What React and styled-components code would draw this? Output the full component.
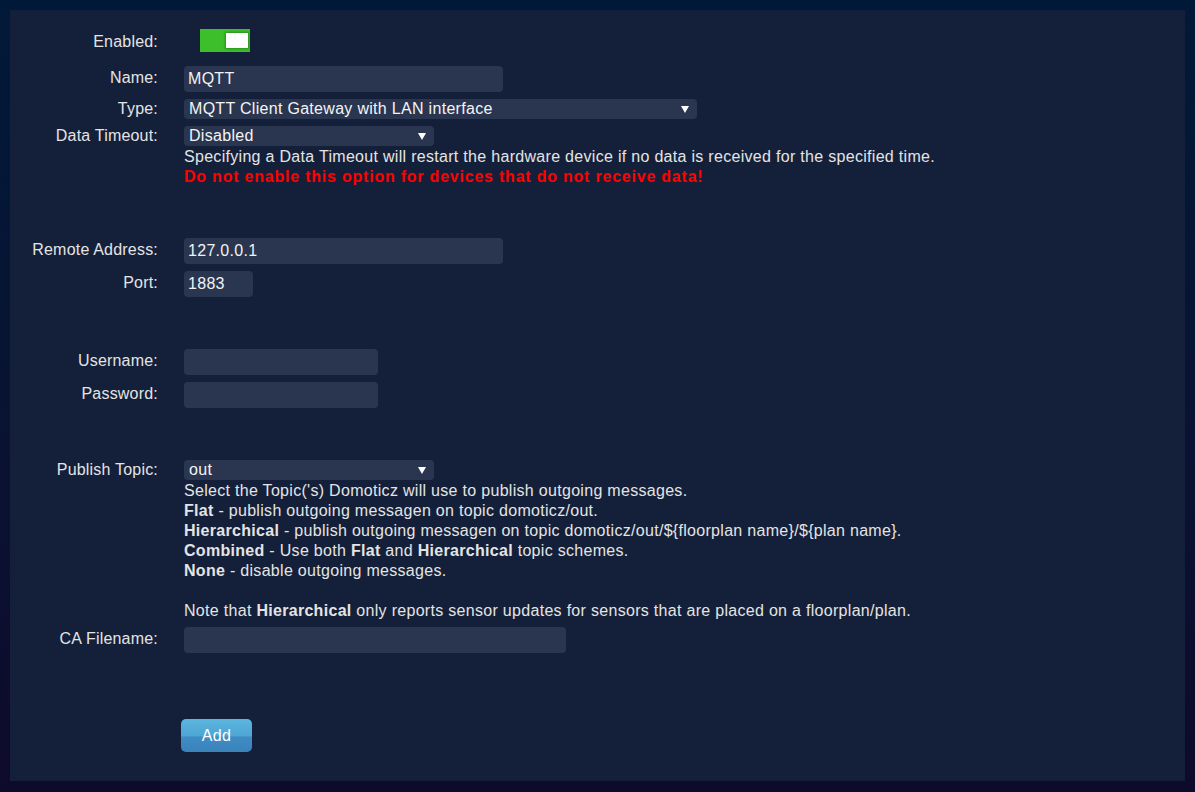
import React from "react";
import styled, { createGlobalStyle } from "styled-components";

const Global = createGlobalStyle`
  html, body { margin: 0; padding: 0; }
  body {
    min-height: 792px;
    background: linear-gradient(180deg, #011938 0%, #0a1232 60%, #0e0a2b 100%);
    font-family: "Liberation Sans", Arial, sans-serif;
    font-size: 16px;
    letter-spacing: 0.3px;
    color: #e4e4e4;
  }
  #root { padding: 10px; }
`;

const Panel = styled.div`
  background: #142039;
  width: 1175px;
  height: 771px;
  box-sizing: border-box;
  padding-top: 19px;
`;

const Row = styled.div`
  display: grid;
  grid-template-columns: 148px 1fr;
  column-gap: 26px;
  align-items: start;
  margin-top: ${(p) => p.$gap ?? 7}px;
`;

const Label = styled.div`
  text-align: right;
  line-height: 20px;
  letter-spacing: 0.2px;
  padding-top: ${(p) => p.$pt ?? 2}px;
  color: #e4e4e4;
`;

const Field = styled.div`
  display: flex;
  flex-direction: column;
  align-items: flex-start;
`;

const Switch = styled.div`
  position: relative;
  margin-left: 16px;
  width: 50px;
  height: 23px;
  background: #3cbf2a;
`;

const Knob = styled.div`
  position: absolute;
  right: 2px;
  top: 4px;
  width: 22px;
  height: 15px;
  background: #ffffff;
  box-shadow: 0 0 2px 1px rgba(30, 110, 20, 0.6);
`;

const Input = styled.input`
  box-sizing: border-box;
  width: ${(p) => p.$w}px;
  height: 26px;
  border: none;
  outline: none;
  border-radius: 4px;
  background: #2a3650;
  color: #f2f2f2;
  padding: 0 4px;
  font-family: "Liberation Sans", Arial, sans-serif;
  font-size: 16px;
  letter-spacing: 0.3px;
`;

const Select = styled.div`
  box-sizing: border-box;
  width: ${(p) => p.$w}px;
  height: 20px;
  border-radius: 4px;
  background: #2a3650;
  color: #f4f4f4;
  padding: 0 8px 0 5px;
  display: flex;
  align-items: center;
  justify-content: space-between;
  line-height: 20px;
`;

const Arrow = styled.svg`
  width: 8px;
  height: 7px;
  flex: none;
`;

const Desc = styled.div`
  line-height: 20px;
  color: #e4e4e4;
  margin-top: ${(p) => (p.$first ? 1 : 0)}px;
`;

const Warn = styled.div`
  line-height: 20px;
  color: #ff0000;
  font-weight: bold;
  letter-spacing: 0.78px;
`;

const Blank = styled.div`
  height: 20px;
`;

const Button = styled.button`
  margin-left: -3px;
  width: 71px;
  height: 33px;
  border: none;
  border-radius: 5px;
  background: linear-gradient(180deg, #5cb6de 0%, #4ea6d4 50%, #3f8cc3 55%, #3a83bb 100%);
  color: #ffffff;
  font-family: "Liberation Sans", Arial, sans-serif;
  font-size: 16px;
  letter-spacing: 0.3px;
  padding: 0;
  cursor: pointer;
`;

const Caret = () => (
  <Arrow viewBox="0 0 8 7">
    <polygon points="0,0 8,0 4,7" fill="#ffffff" />
  </Arrow>
);

export default function App() {
  return (
    <>
      <Global />
      <Panel>
        <Row $gap={0}>
          <Label $pt={3}>Enabled:</Label>
          <Field>
            <Switch>
              <Knob />
            </Switch>
          </Field>
        </Row>

        <Row $gap={14}>
          <Label $pt={2}>Name:</Label>
          <Field>
            <Input $w={319} defaultValue="MQTT" />
          </Field>
        </Row>

        <Row>
          <Label $pt={-1}>Type:</Label>
          <Field>
            <Select $w={513}>
              <span>MQTT Client Gateway with LAN interface</span>
              <Caret />
            </Select>
          </Field>
        </Row>

        <Row>
          <Label $pt={-1}>Data Timeout:</Label>
          <Field>
            <Select $w={250}>
              <span>Disabled</span>
              <Caret />
            </Select>
            <Desc $first>
              Specifying a Data Timeout will restart the hardware device if no data is received for the specified time.
            </Desc>
            <Warn>Do not enable this option for devices that do not receive data!</Warn>
          </Field>
        </Row>

        <Row $gap={51}>
          <Label $pt={2}>Remote Address:</Label>
          <Field>
            <Input $w={319} defaultValue="127.0.0.1" />
          </Field>
        </Row>

        <Row>
          <Label $pt={2}>Port:</Label>
          <Field>
            <Input $w={69} defaultValue="1883" />
          </Field>
        </Row>

        <Row $gap={52}>
          <Label $pt={2}>Username:</Label>
          <Field>
            <Input $w={194} />
          </Field>
        </Row>

        <Row>
          <Label $pt={2}>Password:</Label>
          <Field>
            <Input $w={194} type="password" />
          </Field>
        </Row>

        <Row $gap={52}>
          <Label $pt={-1}>Publish Topic:</Label>
          <Field>
            <Select $w={250}>
              <span>out</span>
              <Caret />
            </Select>
            <Desc $first>Select the Topic('s) Domoticz will use to publish outgoing messages.</Desc>
            <Desc>
              <b>Flat</b> - publish outgoing messagen on topic domoticz/out.
            </Desc>
            <Desc>
              <b>Hierarchical</b> - publish outgoing messagen on topic domoticz/out/${"{floorplan name}"}/${"{plan name}"}.
            </Desc>
            <Desc>
              <b>Combined</b> - Use both <b>Flat</b> and <b>Hierarchical</b> topic schemes.
            </Desc>
            <Desc>
              <b>None</b> - disable outgoing messages.
            </Desc>
            <Blank />
            <Desc>
              Note that <b>Hierarchical</b> only reports sensor updates for sensors that are placed on a floorplan/plan.
            </Desc>
          </Field>
        </Row>

        <Row $gap={6}>
          <Label $pt={2}>CA Filename:</Label>
          <Field>
            <Input $w={382} />
          </Field>
        </Row>

        <Row $gap={66}>
          <div />
          <Field>
            <Button>Add</Button>
          </Field>
        </Row>
      </Panel>
    </>
  );
}
